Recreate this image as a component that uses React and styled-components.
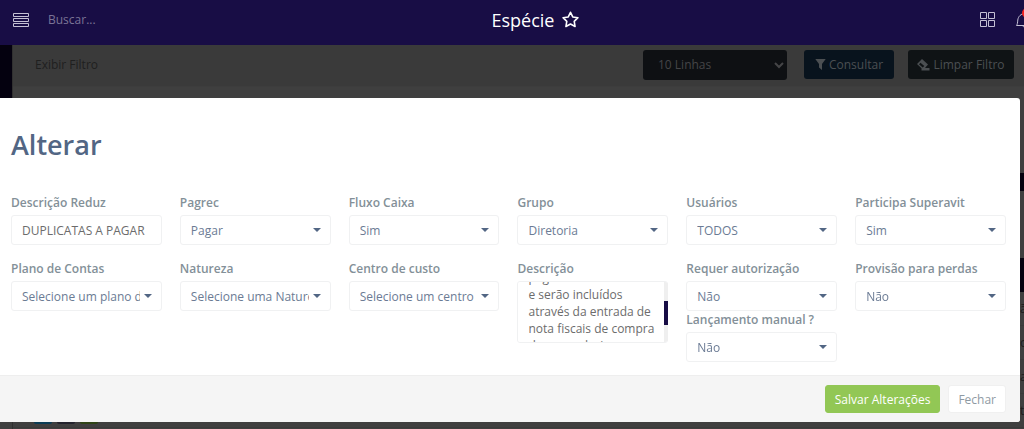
import { useEffect, useRef } from "react";
import styled, { createGlobalStyle } from "styled-components";

const GlobalStyle = createGlobalStyle`
  * {
    box-sizing: border-box;
  }
  body {
    margin: 0;
    overflow: hidden;
    background-color: #3f3f3f;
    font-family: "Open Sans", "Noto Sans", sans-serif;
    font-size: 12px;
  }
  button, input, select, textarea {
    font-family: inherit;
    font-size: 12px;
  }
`;

const Page = styled.div`
  position: relative;
  display: flex;
  flex-direction: column;
  height: 100vh;
  overflow: hidden;
`;

const TopBar = styled.header`
  display: grid;
  flex-shrink: 0;
  grid-template-columns: 1fr auto 1fr;
  align-items: center;
  height: 45px;
  padding: 0 0 6px 13px;
  overflow: hidden;
  background-color: #180d45;
  color: #ffffff;
`;

const SearchArea = styled.div`
  display: flex;
  align-items: center;
  gap: 19px;
`;

const IconButton = styled.button`
  display: flex;
  flex-shrink: 0;
  padding: 0;
  border: 0;
  background: none;
  color: ${({ $color }) => $color || "#ffffff"};
  cursor: pointer;
`;

const SearchInput = styled.input`
  width: 160px;
  padding: 0;
  border: 0;
  outline: 0;
  background: none;
  color: #ffffff;
  &::placeholder {
    color: #7b7496;
  }
`;

const PageTitle = styled.h1`
  display: flex;
  align-items: center;
  gap: 8px;
  margin: 0;
  padding-left: 34px;
  font-size: 18px;
  font-weight: 400;
  line-height: 24px;
`;

const Actions = styled.div`
  display: flex;
  align-items: center;
  justify-content: flex-end;
  gap: 20px;
  margin-right: -10px;
`;

const Bell = styled.div`
  position: relative;
  display: flex;
`;

const BellBadge = styled.span`
  position: absolute;
  top: -4px;
  left: 6px;
  width: 10px;
  height: 10px;
  border-radius: 50%;
  background-color: #f5201e;
`;

const Content = styled.main`
  display: flex;
  flex: 1;
`;

const SideBar = styled.aside`
  width: 12px;
  height: 360px;
  background-color: #04010f;
`;

const Panel = styled.section`
  flex: 1;
  min-width: 0;
  border-left: 1px solid #303030;
`;

const FilterBar = styled.div`
  display: flex;
  align-items: center;
  height: 42px;
  padding: 0 10px 2px 22px;
  border-bottom: 1px solid #3d3d3d;
  background-color: #3a3a3a;
  color: #1f1f1f;
`;

const FilterLabel = styled.span`
  flex: 1;
`;

const LinesSelect = styled.select`
  width: 144px;
  height: 30px;
  margin-right: 17px;
  padding: 0 0 0 11px;
  border: 0;
  border-radius: 3px;
  background-color: #0e1013;
  color: #454547;
`;

const FilterButton = styled.button`
  display: flex;
  align-items: center;
  justify-content: center;
  gap: 3px;
  width: ${({ $width }) => $width};
  height: 29px;
  margin-right: ${({ $gap }) => $gap || "0"};
  padding: 0;
  border: 0;
  border-radius: 3px;
  background-color: ${({ $bg }) => $bg};
  color: #4b4f52;
`;

const Results = styled.div`
  padding-top: 86px;
`;

const Band = styled.div`
  height: ${({ $height }) => $height};
  margin-bottom: ${({ $gap }) => $gap || "0"};
  background-color: #05020f;
`;

const ResultRow = styled.div`
  display: flex;
  align-items: center;
  justify-content: space-between;
  height: 34px;
  padding-left: 21px;
  border-bottom: 1px solid #3a3a3a;
  color: #1c1c1c;
`;

const ResultActions = styled.div`
  display: flex;
  gap: 5px;
`;

const ResultAction = styled.span`
  width: 18px;
  height: 26px;
  border-radius: 2px;
  background-color: ${({ $color }) => $color};
`;

const LastCell = styled.span`
  width: 4px;
  overflow: hidden;
`;

const Modal = styled.form`
  position: absolute;
  top: 98px;
  left: 0;
  right: 4px;
  border-radius: 0 3px 3px 0;
  background-color: #ffffff;
`;

const ModalTitle = styled.h2`
  margin: 0;
  padding: 29px 11px 0;
  color: #526684;
  font-size: 27px;
  font-weight: 600;
  line-height: 36px;
`;

const Fields = styled.div`
  display: grid;
  grid-template-columns: repeat(6, minmax(0, 1fr));
  gap: 15px 18px;
  padding: 31px 14px 13px 11px;
`;

const Column = styled.div`
  display: flex;
  flex-direction: column;
`;

const Label = styled.label`
  padding-bottom: 3px;
  color: #839098;
  font-size: 12px;
  font-weight: 600;
  line-height: 18px;
`;

const TextInput = styled.input`
  width: 100%;
  height: 30px;
  padding: 0 10px;
  border: 1px solid #f0f1f2;
  border-radius: 3px;
  outline: 0;
  color: #6c6c6c;
`;

const FieldBox = styled.div`
  position: relative;
`;

const Select = styled.select`
  width: 100%;
  height: 30px;
  padding: 0 21px 0 10px;
  border: 1px solid #f0f1f2;
  border-radius: 3px;
  outline: 0;
  appearance: none;
  background-color: #ffffff;
  color: #6b7b94;
`;

const Caret = styled.span`
  position: absolute;
  top: 13px;
  right: 10px;
  border-top: 4px solid #526684;
  border-right: 4px solid transparent;
  border-left: 4px solid transparent;
  pointer-events: none;
`;

const TextArea = styled.textarea`
  display: block;
  width: 100%;
  height: 62px;
  padding: 5px 8px 5px 10px;
  border: 1px solid #f0f1f2;
  border-radius: 3px;
  outline: 0;
  resize: none;
  color: #6c6c6c;
  line-height: 17px;
  scrollbar-width: none;
`;

const ScrollTrack = styled.div`
  position: absolute;
  top: 1px;
  right: 0;
  bottom: 1px;
  width: 4px;
  padding-top: 19px;
  border-radius: 0 3px 3px 0;
  background-color: #efefef;
  pointer-events: none;
`;

const ScrollThumb = styled.div`
  height: 24px;
  background-color: #180d45;
`;

const Footer = styled.footer`
  display: flex;
  justify-content: flex-end;
  gap: 8px;
  padding: 9px 14px 9px 11px;
  border-top: 1px solid #eeeeee;
  border-radius: 0 0 3px 0;
  background-color: #f5f5f5;
`;

const FooterButton = styled.button`
  height: 28px;
  padding: 0 9px;
  border: 1px solid ${({ $primary }) => ($primary ? "#92c755" : "#f0f0f0")};
  border-radius: 3px;
  background-color: ${({ $primary }) => ($primary ? "#92c755" : "#ffffff")};
  color: ${({ $primary }) => ($primary ? "#ffffff" : "#8f9aa3")};
  cursor: pointer;
`;

const fields = [
  { id: "pagrec", label: "Pagrec", value: "Pagar" },
  { id: "fluxo", label: "Fluxo Caixa", value: "Sim" },
  { id: "grupo", label: "Grupo", value: "Diretoria" },
  { id: "usuarios", label: "Usuários", value: "TODOS" },
  { id: "superavit", label: "Participa Superavit", value: "Sim" },
  { id: "plano", label: "Plano de Contas", value: "Selecione um plano de contas" },
  { id: "natureza", label: "Natureza", value: "Selecione uma Natureza" },
  { id: "centro", label: "Centro de custo", value: "Selecione um centro de custo" },
];

const description = [
  "Nesta espécie ficam",
  "as duplicatas com",
  "os valores a",
  "pagar a fornecedores",
  "e serão incluídos",
  "através da entrada de",
  "nota fiscais de compra",
  "de mercadorias e",
  "serviços da empresa.",
].join("\n");

const resultRows = ["ão", "o", "a", "t"];

const SelectField = ({ id, label, value }) => (
  <Column>
    <Label htmlFor={id}>{label}</Label>
    <FieldBox>
      <Select id={id} defaultValue={value}>
        <option>{value}</option>
      </Select>
      <Caret />
    </FieldBox>
  </Column>
);

const App = () => {
  const descriptionRef = useRef(null);

  // keep the middle of the description in view
  useEffect(() => {
    descriptionRef.current.scrollTop = 69;
  }, []);

  return (
    <Page>
      <GlobalStyle />
      <TopBar>
        <SearchArea>
          <IconButton type="button" aria-label="Menu" $color="#c4c0d4">
            <svg width="16" height="14" viewBox="0 0 16 14" fill="none" stroke="currentColor">
              <path d="M.5.5h15v3H.5zM.5 5.500h15v3H.5zM.5 10.500h15v3H.5z" />
            </svg>
          </IconButton>
          <SearchInput type="text" placeholder="Buscar..." aria-label="Buscar" />
        </SearchArea>
        <PageTitle>
          Espécie
          <IconButton type="button" aria-label="Favoritar">
            <svg width="17" height="17" viewBox="0 0 16 16" fill="none" stroke="currentColor" strokeWidth="1.5" strokeLinejoin="round">
              <path d="M8 1.200l2.100 4.400 4.900.7-3.500 3.400.8 4.900L8 12.300l-4.300 2.300.8-4.900L1 6.300l4.900-.7z" />
            </svg>
          </IconButton>
        </PageTitle>
        <Actions>
          <IconButton type="button" aria-label="Aplicativos" $color="#c4c0d4">
            <svg width="16" height="16" viewBox="0 0 16 16" fill="none" stroke="currentColor">
              <path d="M.5.5h6v6h-6zM8.500.5h6v6h-6zM.5 8.500h6v6h-6zM8.500 8.500h6v6h-6z" />
            </svg>
          </IconButton>
          <Bell>
            <IconButton type="button" aria-label="Notificações" $color="#c4c0d4">
              <svg width="18" height="16" viewBox="0 0 18 16" fill="none" stroke="currentColor">
                <path d="M.5 13.500C1.500 12 1.500 11 1.800 8 2.200 4.500 5 1.500 9 1.500s6.800 3 7.200 6.500c.3 3 .3 4 1.300 5.500zM7 13.500c0 2.500 4 2.500 4 0" />
              </svg>
            </IconButton>
            <BellBadge />
          </Bell>
        </Actions>
      </TopBar>

      <Content>
        <SideBar />
        <Panel>
          <FilterBar>
            <FilterLabel>Exibir Filtro</FilterLabel>
            <LinesSelect aria-label="Linhas por página">
              <option>10 Linhas</option>
            </LinesSelect>
            <FilterButton type="button" $width="90px" $gap="14px" $bg="#08131d">
              <svg width="11" height="11" viewBox="0 0 11 11" fill="currentColor">
                <path d="M.3 0h10.400L7 5v6L4 8.500V5z" />
              </svg>
              Consultar
            </FilterButton>
            <FilterButton type="button" $width="106px" $bg="#0f1315">
              <svg width="13" height="12" viewBox="0 0 13 12" fill="currentColor">
                <path fillRule="evenodd" d="M5 0l6 5.500L8 9h4.500v2.500h-8V9.200L0 5zM3.500 3.800L2 5.200l3.700 3.300L7.300 7z" />
              </svg>
              Limpar Filtro
            </FilterButton>
          </FilterBar>
          <Results>
            <Band $height="18px" $gap="67px" />
            <Band $height="34px" />
            {resultRows.map((text) => (
              <ResultRow key={text}>
                <ResultActions>
                  <ResultAction $color="#0b3c55" />
                  <ResultAction $color="#23232d" />
                  <ResultAction $color="#2f4416" />
                </ResultActions>
                <LastCell>{text}</LastCell>
              </ResultRow>
            ))}
          </Results>
        </Panel>
      </Content>

      <Modal onSubmit={(e) => e.preventDefault()}>
        <ModalTitle>Alterar</ModalTitle>
        <Fields>
          <Column>
            <Label htmlFor="reduz">Descrição Reduz</Label>
            <TextInput id="reduz" type="text" defaultValue="DUPLICATAS A PAGAR" />
          </Column>
          {fields.map((field) => (
            <SelectField key={field.id} {...field} />
          ))}
          <Column>
            <Label htmlFor="descricao">Descrição</Label>
            <FieldBox>
              <TextArea id="descricao" ref={descriptionRef} defaultValue={description} />
              <ScrollTrack>
                <ScrollThumb />
              </ScrollTrack>
            </FieldBox>
          </Column>
          <Column>
            <SelectField id="autorizacao" label="Requer autorização" value="Não" />
            <SelectField id="manual" label="Lançamento manual ?" value="Não" />
          </Column>
          <SelectField id="provisao" label="Provisão para perdas" value="Não" />
        </Fields>
        <Footer>
          <FooterButton type="submit" $primary>
            Salvar Alterações
          </FooterButton>
          <FooterButton type="button">Fechar</FooterButton>
        </Footer>
      </Modal>
    </Page>
  );
};

export default App;
